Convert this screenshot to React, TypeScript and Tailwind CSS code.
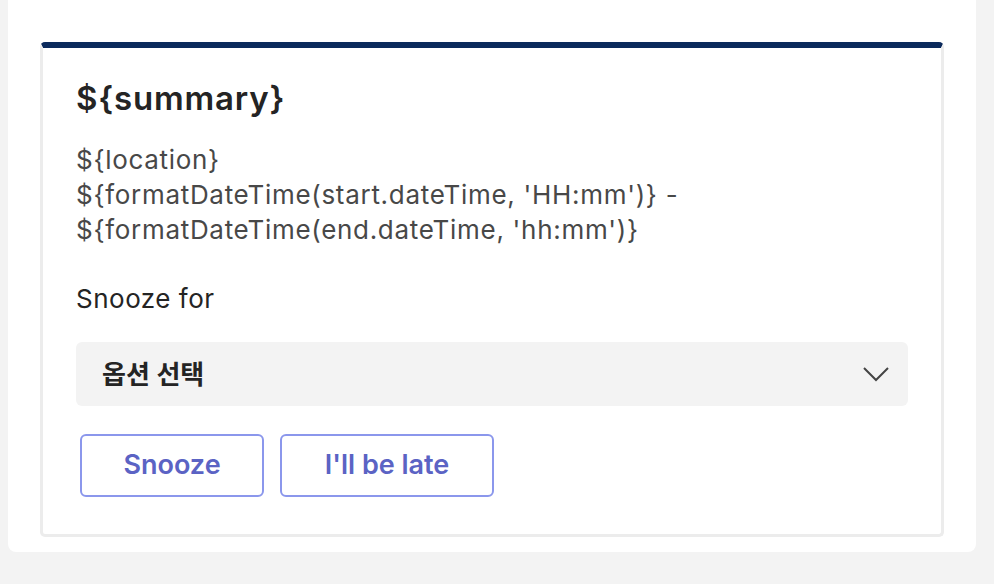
const font = { fontFamily: 'Inter, "Noto Sans CJK KR", sans-serif' }

export default function App() {
  return (
    <div className="min-h-[584px] bg-[#f3f3f3]" style={font}>
      <div className="ml-2 w-[968px] rounded-b-lg bg-white px-8 pb-[15px] pt-[42px]">
        <div className="rounded-[5px] border-[3px] border-t-[6px] border-[#ececec] border-t-[#0b2a5c] px-[33px] pb-[37px] pt-[30px]">
          <h1 className="text-[33px] font-semibold leading-[40px] tracking-[0.8px] text-[#242424]">
            {'${summary}'}
          </h1>
          <p className="mt-[24px] text-[26px] leading-[35px] tracking-[0.7px] text-[#484848]">
            {'${location}'}
            <br />
            {"${formatDateTime(start.dateTime, 'HH:mm')} -"}
            <br />
            {"${formatDateTime(end.dateTime, 'hh:mm')}"}
          </p>
          <p className="mt-[34px] text-[26px] leading-[35px] tracking-[0.5px] text-[#242424]">Snooze for</p>
          <button className="mt-[26px] flex h-[64px] w-full items-center justify-between rounded-[6px] bg-[#f3f3f3] pl-[26px] pr-[19px] text-[26px] font-semibold text-[#242424]">
            <span>옵션 선택</span>
            <svg width="26" height="15" viewBox="0 0 26 15" fill="none" stroke="#444" strokeWidth="2">
              <polyline points="1,1 13,13 25,1" />
            </svg>
          </button>
          <div className="mt-[28px] flex gap-4 pl-1">
            <button className="h-[63px] w-[184px] rounded-[6px] border-2 border-[#8b97ec] text-[27px] font-semibold text-[#5b63c4]">
              Snooze
            </button>
            <button className="h-[63px] w-[214px] rounded-[6px] border-2 border-[#8b97ec] text-[27px] font-semibold text-[#5b63c4]">
              I&apos;ll be late
            </button>
          </div>
        </div>
      </div>
    </div>
  )
}
